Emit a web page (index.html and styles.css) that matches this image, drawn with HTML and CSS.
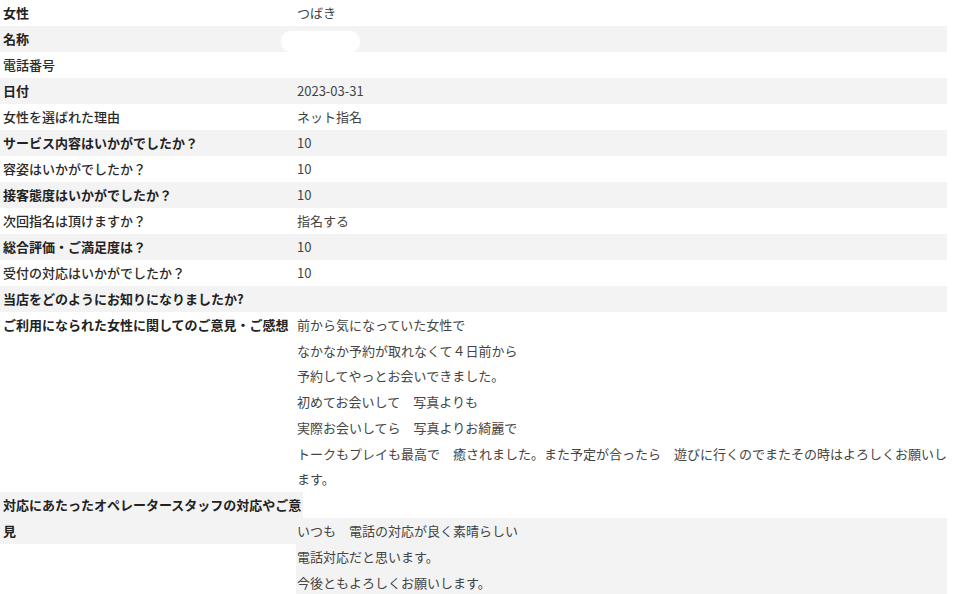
FILE: index.html
```html
<!DOCTYPE html>
<html lang="ja">
<head>
  <meta charset="UTF-8">
  <meta name="viewport" content="width=device-width, initial-scale=1.0">
  <title>アンケート結果</title>
  <link rel="stylesheet" href="styles.css">
</head>
<body>
  <dl class="survey">
    <div class="row">
      <dt class="label strong">女性</dt>
      <dd class="value">つばき</dd>
    </div>
    <div class="row shaded">
      <dt class="label strong">名称</dt>
      <dd class="value"><span class="mask"></span></dd>
    </div>
    <div class="row">
      <dt class="label">電話番号</dt>
      <dd class="value"></dd>
    </div>
    <div class="row shaded">
      <dt class="label strong">日付</dt>
      <dd class="value">2023-03-31</dd>
    </div>
    <div class="row">
      <dt class="label">女性を選ばれた理由</dt>
      <dd class="value">ネット指名</dd>
    </div>
    <div class="row shaded">
      <dt class="label strong">サービス内容はいかがでしたか？</dt>
      <dd class="value">10</dd>
    </div>
    <div class="row">
      <dt class="label">容姿はいかがでしたか？</dt>
      <dd class="value">10</dd>
    </div>
    <div class="row shaded">
      <dt class="label strong">接客態度はいかがでしたか？</dt>
      <dd class="value">10</dd>
    </div>
    <div class="row">
      <dt class="label">次回指名は頂けますか？</dt>
      <dd class="value">指名する</dd>
    </div>
    <div class="row shaded">
      <dt class="label strong">総合評価・ご満足度は？</dt>
      <dd class="value">10</dd>
    </div>
    <div class="row">
      <dt class="label">受付の対応はいかがでしたか？</dt>
      <dd class="value">10</dd>
    </div>
    <div class="row shaded">
      <dt class="label strong">当店をどのようにお知りになりましたか?</dt>
      <dd class="value"></dd>
    </div>
    <div class="row">
      <dt class="label strong">ご利用になられた女性に関してのご意見・ご感想</dt>
      <dd class="value long">前から気になっていた女性で<br>なかなか予約が取れなくて４日前から<br>予約してやっとお会いできました。<br>初めてお会いして　写真よりも<br>実際お会いしてら　写真よりお綺麗で<br>トークもプレイも最高で　癒されました。また予定が合ったら　遊びに行くのでまたその時はよろしくお願いします。</dd>
    </div>
    <div class="row split">
      <dt class="label strong wide">対応にあたったオペレータースタッフの対応やご意見</dt>
      <dd class="value lowered">いつも　電話の対応が良く素晴らしい<br>電話対応だと思います。<br>今後ともよろしくお願いします。</dd>
    </div>
  </dl>
</body>
</html>
```

FILE: styles.css
```css
/* General Styles */
body {
  margin: 0;
  padding: 0;
  background-color: #fff;
  font-family: "Noto Sans CJK JP", "Noto Sans", sans-serif;
  font-size: 13px;
  line-height: 26px;
}

.survey {
  width: 947px;
  margin: 0;
}

.row {
  display: flex;
  align-items: flex-start;
}

.row.shaded {
  background-color: #f3f3f3;
}

.label {
  flex: 0 0 293px;
  padding-left: 3px;
  margin: 0;
  color: #2a2a2a;
  font-weight: 500;
}

.label.strong {
  font-weight: bold;
  color: #222;
}

.value {
  position: relative;
  flex: 1;
  min-height: 26px;
  margin: 0;
  padding-left: 1px;
  color: #444;
}

.value.long {
  line-height: 25.714px;
}

/* Last row: label wraps, value starts one line lower */
.split .label,
.split .value {
  background-color: #f3f3f3;
}

.label.wide {
  flex-basis: 300px;
  margin-right: -7px;
}

.value.lowered {
  margin-top: 26px;
}

/* Redacted name */
.mask {
  position: absolute;
  left: -15px;
  top: 5px;
  width: 79px;
  height: 21px;
  border-radius: 11px;
  background-color: #fff;
  box-shadow: 0 0 2px #fff;
}
```
